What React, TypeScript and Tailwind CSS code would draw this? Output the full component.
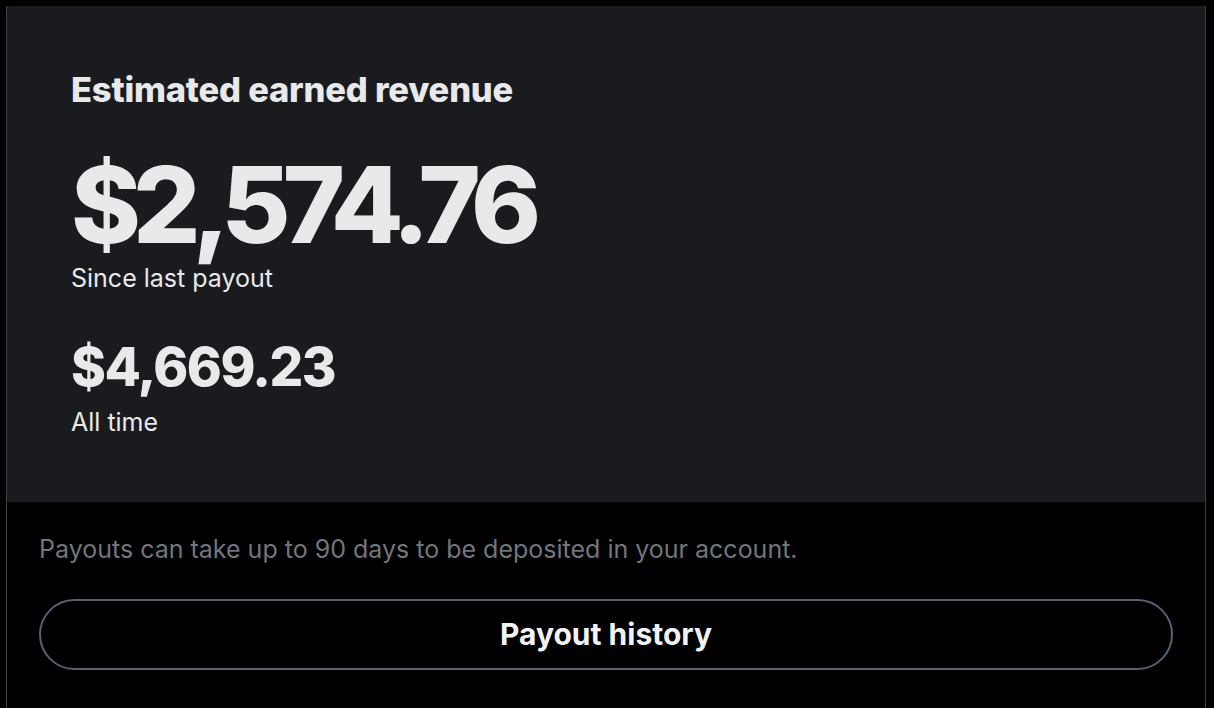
export default function App() {
  return (
    <div className="w-[1214px] h-[708px] bg-black overflow-hidden pt-[6px] pl-[6px] pr-[8px]" style={{ fontFamily: "Inter, 'Noto Sans', sans-serif" }}>
      <div className="h-full border-x border-[#3e4144] bg-black">
        <div className="bg-[#1a1b1f] h-[496px] pl-[64px] pt-[64px]">
          <div className="text-[34.5px] leading-[40px] font-extrabold text-[#e7e9ea] tracking-[-0.2px]">Estimated earned revenue</div>
          <div className="mt-[42px] text-[106px] leading-[106px] font-extrabold text-[#e7e9ea] tracking-[-8px]">$2,574.76</div>
          <div className="mt-[5px] text-[25px] leading-[30px] text-[#e7e9ea]">Since last payout</div>
          <div className="mt-[44px] text-[53px] leading-[60px] font-extrabold text-[#e7e9ea] tracking-[-1.5px]">$4,669.23</div>
          <div className="mt-[10px] text-[25px] leading-[30px] text-[#e7e9ea]">All time</div>
        </div>
        <div className="pl-[32px] pr-[32px]">
          <div className="mt-[32px] text-[25px] leading-[30px] text-[#71767b]">Payouts can take up to 90 days to be deposited in your account.</div>
          <button className="mt-[35px] w-full h-[71px] rounded-full border-2 border-[#536471] text-[30px] font-bold text-[#eff3f4] flex items-center justify-center">Payout history</button>
        </div>
      </div>
    </div>
  );
}
